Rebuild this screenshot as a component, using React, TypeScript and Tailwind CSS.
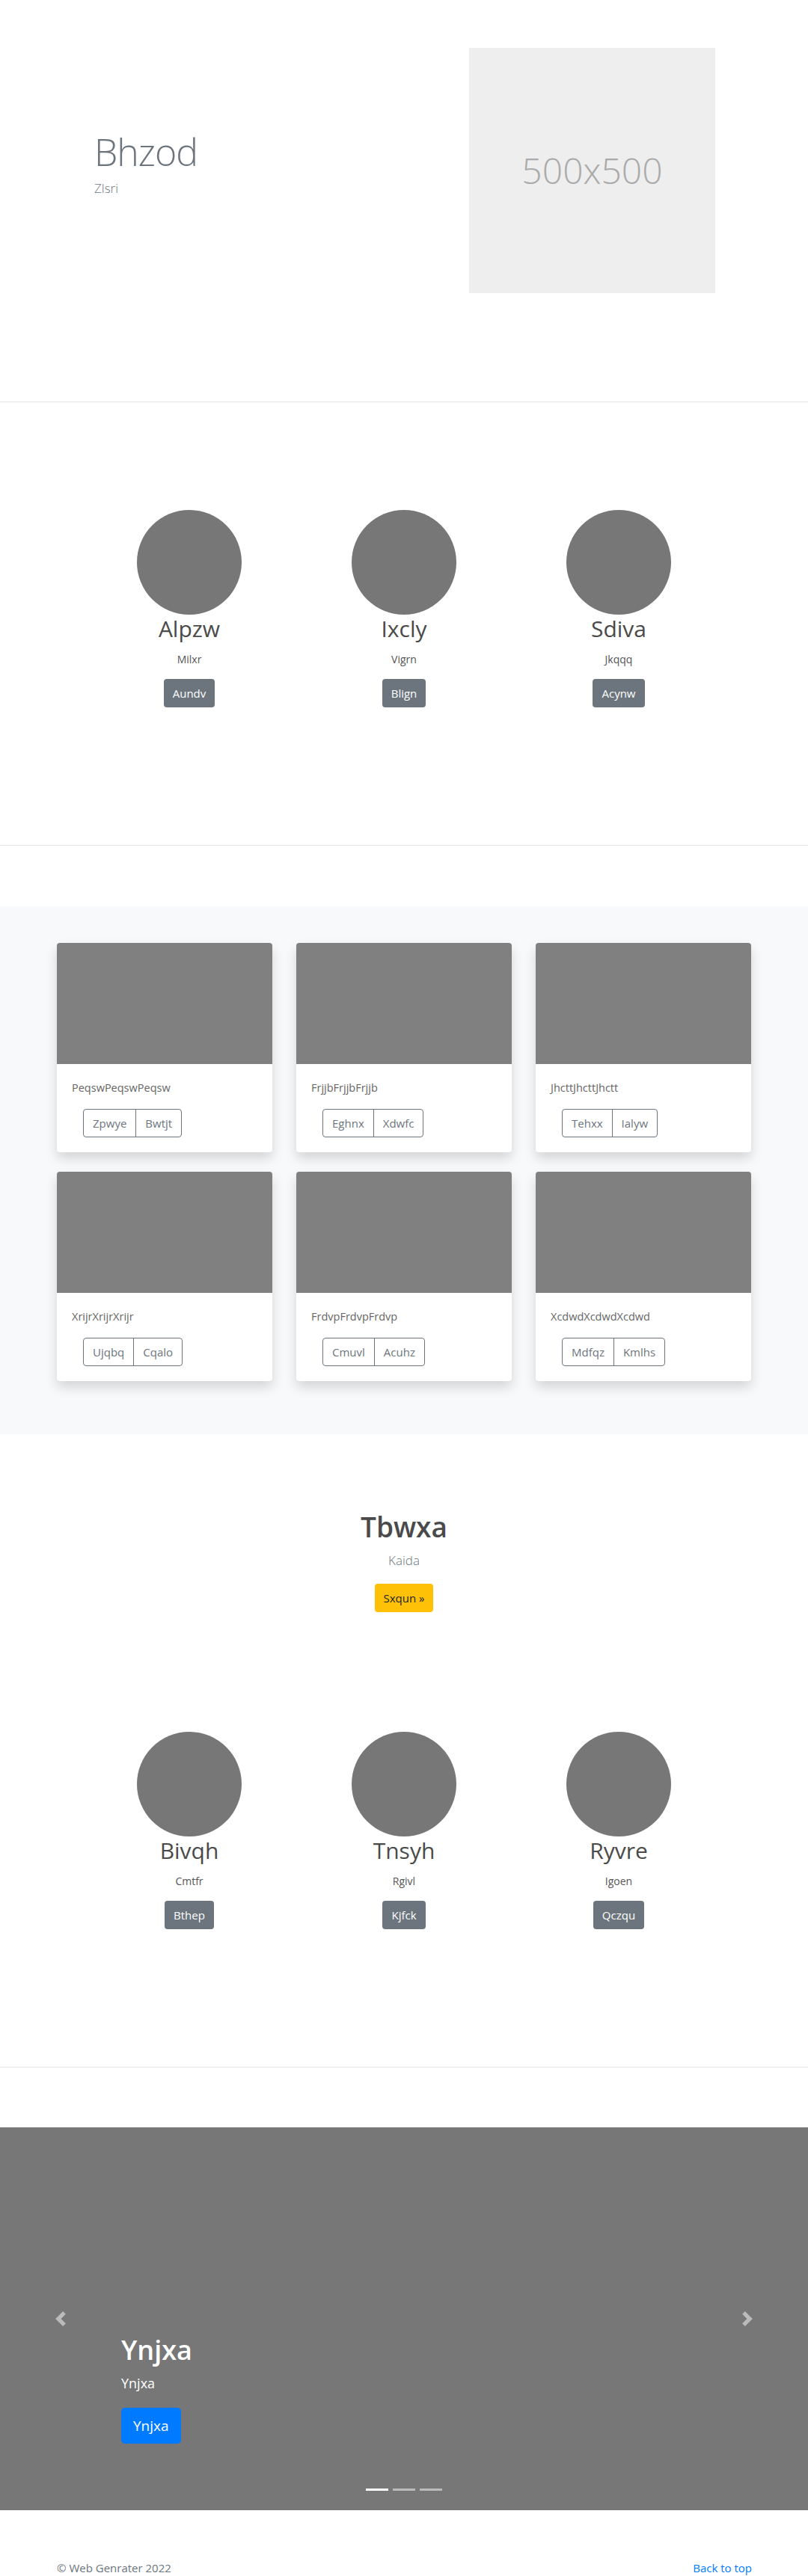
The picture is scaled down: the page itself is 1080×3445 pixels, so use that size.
const team1 = [
  { name: "Alpzw", role: "Milxr", btn: "Aundv" },
  { name: "Ixcly", role: "Vigrn", btn: "Blign" },
  { name: "Sdiva", role: "Jkqqq", btn: "Acynw" },
];

const team2 = [
  { name: "Bivqh", role: "Cmtfr", btn: "Bthep" },
  { name: "Tnsyh", role: "Rgivl", btn: "Kjfck" },
  { name: "Ryvre", role: "Igoen", btn: "Qczqu" },
];

const cards = [
  { text: "PeqswPeqswPeqsw", a: "Zpwye", b: "Bwtjt" },
  { text: "FrjjbFrjjbFrjjb", a: "Eghnx", b: "Xdwfc" },
  { text: "JhcttJhcttJhctt", a: "Tehxx", b: "Ialyw" },
  { text: "XrijrXrijrXrijr", a: "Ujqbq", b: "Cqalo" },
  { text: "FrdvpFrdvpFrdvp", a: "Cmuvl", b: "Acuhz" },
  { text: "XcdwdXcdwdXcdwd", a: "Mdfqz", b: "Kmlhs" },
];

type Member = { name: string; role: string; btn: string };

const TeamRow = ({ members }: { members: Member[] }) => (
  <div className="mx-auto grid w-[861px] grid-cols-3">
    {members.map((m) => (
      <div key={m.name} className="flex flex-col items-center">
        <div className="h-[140px] w-[140px] rounded-full bg-[#777777]" />
        <h2 className="mt-[1px] text-[30px] font-normal leading-[36px] text-[#4a4a4a]">
          {m.name}
        </h2>
        <p className="mt-[12px] text-[14px] leading-[22px] text-[#555]">
          {m.role}
        </p>
        <button className="mt-[15px] flex h-[38px] items-center rounded-[4px] bg-[#6c757d] px-[12px] text-[15px] text-white">
          {m.btn}
        </button>
      </div>
    ))}
  </div>
);

const Chevron = ({ dir }: { dir: "left" | "right" }) => (
  <svg width="20" height="20" viewBox="0 0 8 8" fill="#ffffff" opacity="0.5">
    {dir === "left" ? (
      <path d="M5.25 0l-4 4 4 4 1.5-1.5L4.25 4l2.5-2.5L5.25 0z" />
    ) : (
      <path d="M2.75 0l-1.5 1.5L3.75 4l-2.5 2.5L2.75 8l4-4-4-4z" />
    )}
  </svg>
);

export default function App() {
  return (
    <div className="bg-white font-['Open_Sans',sans-serif] text-[#212529]">
      {/* hero */}
      <section className="h-[538px] border-b border-[#e5e5e5]">
        <div className="flex items-start justify-between pl-[126px] pr-[124px] pt-[64px]">
          <div className="mt-[109px]">
            <h1 className="text-[50px] font-light leading-[60px] tracking-[-0.02em] text-[#6c757d]">
              Bhzod
            </h1>
            <p className="mt-[6px] text-[17px] font-light leading-[26px] text-[#6c757d]">
              Zlsri
            </p>
          </div>
          <div className="flex h-[328px] w-[329px] items-center justify-center bg-[#eeeeee]">
            <span className="text-[48px] font-light text-[#aaaaaa]">500x500</span>
          </div>
        </div>
      </section>

      {/* team */}
      <section className="border-b border-[#e5e5e5] pb-[184px] pt-[144px]">
        <TeamRow members={team1} />
      </section>

      {/* cards */}
      <div className="pt-[81px]">
        <section className="bg-[#f8f9fa] pb-[71px] pt-[49px]">
          <div className="mx-auto grid w-[928px] grid-cols-3 gap-x-[32px] gap-y-[26px]">
            {cards.map((c) => (
              <div
                key={c.text}
                className="overflow-hidden rounded-[4px] bg-white shadow-[0_8px_16px_rgba(0,0,0,0.15)]"
              >
                <div className="h-[162px] bg-[#808080]" />
                <div className="p-[20px]">
                  <p className="text-[14.5px] leading-[24px] text-[#666]">{c.text}</p>
                  <div className="ml-[15px] mt-[16px] inline-flex h-[38px] overflow-hidden rounded-[4px] border border-[#6c757d] text-[15px] text-[#6c757d]">
                    <span className="flex items-center px-[12px]">{c.a}</span>
                    <span className="flex items-center border-l border-[#6c757d] px-[12px]">
                      {c.b}
                    </span>
                  </div>
                </div>
              </div>
            ))}
          </div>
        </section>
      </div>

      {/* heading + second team */}
      <section className="border-b border-[#e5e5e5] pb-[184px] pt-[102px]">
        <div className="flex flex-col items-center">
          <h1 className="text-[37px] font-semibold leading-[44px] text-[#4a4a4a]">
            Tbwxa
          </h1>
          <p className="mt-[10px] text-[17px] font-light leading-[26px] text-[#6c757d]">
            Kaida
          </p>
          <button className="mt-[18px] flex h-[38px] items-center rounded-[4px] bg-[#ffc107] px-[12px] text-[15px] text-[#212529]">
            Sxqun »
          </button>
        </div>
        <div className="mt-[160px]">
          <TeamRow members={team2} />
        </div>
      </section>

      {/* carousel */}
      <div className="pt-[80px]">
        <section className="relative h-[512px] bg-[#777777]">
          <div className="absolute left-[71px] top-[246px]">
            <Chevron dir="left" />
          </div>
          <div className="absolute right-[71px] top-[246px]">
            <Chevron dir="right" />
          </div>
          <div className="absolute left-[162px] top-[276px] text-white">
            <h1 className="text-[36px] font-semibold leading-[43px]">Ynjxa</h1>
            <p className="mt-[10px] text-[18px] leading-[27px]">Ynjxa</p>
            <button className="mt-[19px] flex h-[48px] items-center rounded-[5px] bg-[#007bff] px-[16px] text-[19px] text-white">
              Ynjxa
            </button>
          </div>
          <div className="absolute bottom-[26px] left-0 right-0 flex justify-center gap-[6px]">
            <span className="h-[3px] w-[30px] bg-white" />
            <span className="h-[3px] w-[30px] bg-white/50" />
            <span className="h-[3px] w-[30px] bg-white/50" />
          </div>
        </section>
      </div>

      {/* footer */}
      <footer className="flex justify-between pb-[48px] pl-[76px] pr-[75px] pt-[65px] text-[15px] leading-[24px]">
        <p className="text-[#6c757d]">© Web Genrater 2022</p>
        <a href="#" className="text-[#007bff]">
          Back to top
        </a>
      </footer>
    </div>
  );
}
